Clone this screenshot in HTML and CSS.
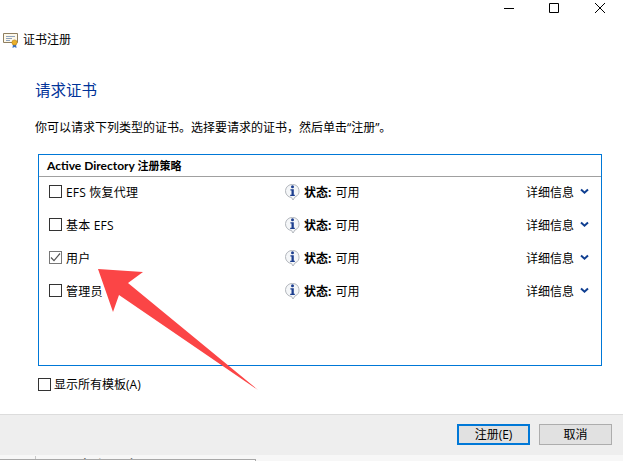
FILE: index.html
```html
<!DOCTYPE html>
<html>

	<head>
		<meta charset="UTF-8">
		<title>证书注册</title>
		<link rel="stylesheet" href="styles.css">
	</head>

	<body>
		<div class="window">
			<div class="caption">
				<svg class="cap_btn" width="46" height="16" viewBox="0 0 46 16"><path d="M19 8.5h10" stroke="#000" fill="none"/></svg>
				<svg class="cap_btn" width="46" height="16" viewBox="0 0 46 16"><path d="M18.5 3.5h9v9h-9z" stroke="#000" fill="none"/></svg>
				<svg class="cap_btn" width="46" height="16" viewBox="0 0 46 16"><path d="M18 3l10 10M28 3L18 13" stroke="#000" fill="none"/></svg>
			</div>
			<div class="title_row">
				<svg class="cert_icon" width="17" height="16" viewBox="0 0 17 16">
					<path d="M1.5 1.5h14v9h-14z" fill="#fdf8ea" stroke="#8f7f60"/>
					<path d="M4 4.5h9M4 6.5h6M4 8.5h4" stroke="#8fa3bd" fill="none"/>
					<path d="M11 12l-.5 4 2-1 2 1-.5-4z" fill="#3a6fc0"/>
					<circle cx="12.5" cy="10.5" r="2.6" fill="#e9b02c" stroke="#b67f12" stroke-width=".6"/>
				</svg>
				<span>证书注册</span>
			</div>
			<div class="content">
				<h1>请求证书</h1>
				<p class="intro">你可以请求下列类型的证书。选择要请求的证书，然后单击“注册”。</p>
				<div class="policy">
					<div class="policy_head">Active Directory <span class="head_cn">注册策略</span></div>
					<ul class="policy_list">
						<li>
							<label class="cert_name"><span class="box"></span>EFS 恢复代理</label>
							<div class="status">
								<svg class="info" width="17" height="18" viewBox="0 0 17 18"><use href="#info"/></svg>
								<b>状态:</b> 可用
							</div>
							<div class="more">详细信息<svg width="9" height="7" viewBox="0 0 9 7"><use href="#chev"/></svg></div>
						</li>
						<li>
							<label class="cert_name"><span class="box"></span>基本 EFS</label>
							<div class="status">
								<svg class="info" width="17" height="18" viewBox="0 0 17 18"><use href="#info"/></svg>
								<b>状态:</b> 可用
							</div>
							<div class="more">详细信息<svg width="9" height="7" viewBox="0 0 9 7"><use href="#chev"/></svg></div>
						</li>
						<li>
							<label class="cert_name"><span class="box checked"><svg width="11" height="11" viewBox="0 0 11 11"><path d="M1 5.5l3 3.2L10 1.5" stroke="#555" stroke-width="1.2" fill="none"/></svg></span>用户</label>
							<div class="status">
								<svg class="info" width="17" height="18" viewBox="0 0 17 18"><use href="#info"/></svg>
								<b>状态:</b> 可用
							</div>
							<div class="more">详细信息<svg width="9" height="7" viewBox="0 0 9 7"><use href="#chev"/></svg></div>
						</li>
						<li>
							<label class="cert_name"><span class="box"></span>管理员</label>
							<div class="status">
								<svg class="info" width="17" height="18" viewBox="0 0 17 18"><use href="#info"/></svg>
								<b>状态:</b> 可用
							</div>
							<div class="more">详细信息<svg width="9" height="7" viewBox="0 0 9 7"><use href="#chev"/></svg></div>
						</li>
					</ul>
				</div>
				<label class="show_all"><span class="box"></span>显示所有模板(A)</label>
			</div>
			<div class="footer">
				<a class="btn btn_default" href="javascript:;">注册(E)</a>
				<a class="btn" href="javascript:;">取消</a>
			</div>
			<div class="behind">
				<div class="behind_top"><i class="behind_rule"></i><span class="behind_text">用户和服务器</span></div>
				<div class="behind_pane"></div>
			</div>
		</div>

		<svg class="arrow" width="623" height="461" viewBox="0 0 623 461"><path d="M98 269L143 272L128 283L258 390L119 295L113 312z" fill="#fb4546"/></svg>

		<svg class="defs" width="0" height="0">
			<defs>
				<g id="info">
					<path d="M8.5 1.5a6.5 6.5 0 0 1 2.5 12.5l-2 3-1.5-2.5a6.5 6.5 0 0 1 1-13z" fill="#f4f6f8" stroke="#b4b8be"/>
					<circle cx="8.5" cy="3.8" r="1.5" fill="#1d3f8f"/>
					<path d="M6.4 6.2h3.4v5.6h1v1.3H6.2v-1.3h1.3V7.5H6.4z" fill="#1d3f8f"/>
				</g>
				<path id="chev" d="M1 1.5l3.5 3.2L8 1.5" stroke="#103f91" stroke-width="2" fill="none"/>
			</defs>
		</svg>
	</body>

</html>
```

FILE: styles.css
```css
* {margin: 0;padding: 0;box-sizing: border-box;}
li { list-style:none; }
html,body { width:623px; height:461px; overflow:hidden; background:#fff; }
body { font-family:"Open Sans","Noto Sans CJK SC",sans-serif; font-size:12px; color:#000; }

.window { display:flex; flex-direction:column; height:461px; }

.caption { display:flex; justify-content:flex-end; height:16px; }
.cap_btn { display:block; }

.title_row { display:flex; align-items:center; gap:4px; height:16px; margin-top:16px; padding-left:2px; line-height:16px; }
.cert_icon { display:block; }

.content { flex:1; padding:0 21px 0 35px; }
.content h1 { margin-top:31px; height:22px; font-size:15.5px; font-weight:normal; line-height:22px; color:#003399; }
.intro { margin-top:18px; height:18px; line-height:18px; }

.policy { margin:17px 0 0 3px; width:564px; height:212px; border:1px solid #0078d7; }
.policy_head { height:22px; padding-left:8px; border-bottom:1px solid #a0a0a0; font-family:Lato,"Noto Sans CJK SC",sans-serif; font-size:12px; font-weight:bold; line-height:21px; }
.head_cn { font-size:11px; }
.policy_list li { display:flex; align-items:center; height:33px; padding-bottom:4px; }

.box { display:flex; align-items:center; justify-content:center; flex:none; width:13px; height:13px; border:1px solid #333; background:#fff; }
.box.checked { border-color:#777; }

.cert_name { display:flex; align-items:center; gap:4px; width:245px; padding-left:10px; letter-spacing:.2px; }
.status { display:flex; align-items:center; width:242px; }
.status b { margin:0 4px 0 3px; }
.info { display:block; }
.more { display:flex; align-items:center; gap:6px; }

.show_all { display:flex; align-items:center; gap:3px; margin:10px 0 0 3px; height:16px; }

.footer { display:flex; justify-content:flex-end; gap:9px; height:41px; padding:9px 11px 0 0; background:#eeeeee; border-top:1px solid #dcdcdc; }
.btn { display:block; width:73px; height:21px; border:1px solid #adadad; background:#e1e1e1; color:#000; font-size:12px; line-height:19px; text-align:center; text-decoration:none; }
.btn_default { border:2px solid #0078d7; line-height:17px; }

.behind { height:6px; background:#f7f7f7; overflow:hidden; }
.behind_top { display:flex; height:4px; padding-top:1px; overflow:hidden; }
.behind_rule { flex:none; width:1px; margin-left:35px; background:#c8c8c8; }
.behind_text { flex:none; margin-left:25px; font-size:16px; line-height:20px; color:#444; }
.behind_pane { width:256px; height:2px; border-top:1px solid #a8a8a8; border-right:1px solid #a8a8a8; background:#fff; }

.arrow { position:absolute; left:0; top:0; pointer-events:none; }
.defs { position:absolute; }
```
